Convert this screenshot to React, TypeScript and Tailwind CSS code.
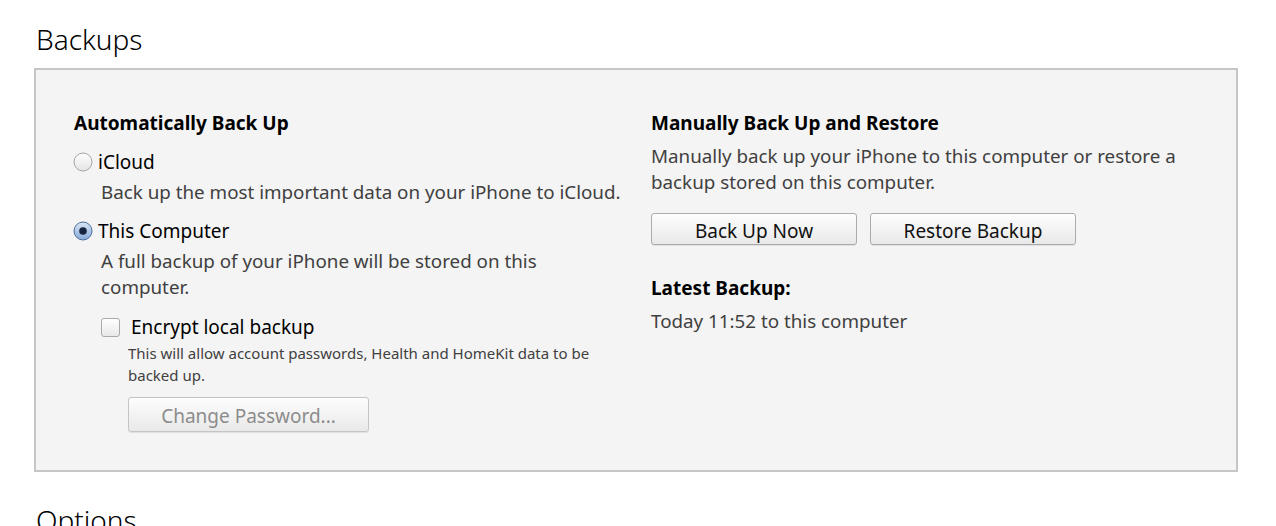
import React from "react";

const font = { fontFamily: '"Noto Sans", "Open Sans", sans-serif' };

function Radio({ checked }: { checked: boolean }) {
  return (
    <svg width="20" height="20" viewBox="0 0 20 20" className="shrink-0">
      <defs>
        <linearGradient id={checked ? "rg1" : "rg0"} x1="0" y1="0" x2="0" y2="1">
          {checked ? (
            <>
              <stop offset="0" stopColor="#dbe7f6" />
              <stop offset="1" stopColor="#86a9d6" />
            </>
          ) : (
            <>
              <stop offset="0" stopColor="#ffffff" />
              <stop offset="1" stopColor="#e4e4e4" />
            </>
          )}
        </linearGradient>
      </defs>
      <circle cx="10" cy="10" r="9" fill={`url(#${checked ? "rg1" : "rg0"})`} stroke={checked ? "#4a6d9c" : "#a5a5a5"} strokeWidth="1" />
      {checked && <circle cx="10" cy="10" r="3.8" fill="#17243b" />}
    </svg>
  );
}

function Btn({ children, w, h, disabled }: { children: React.ReactNode; w: string; h: string; disabled?: boolean }) {
  return (
    <div
      className={`${w} ${h} flex items-center justify-center pt-[3px] rounded-[3px] border bg-gradient-to-b from-[#fdfdfd] to-[#e9e9e9] text-[19px] leading-[26px] shadow-[0_1px_0_rgba(0,0,0,0.08)] ${
        disabled ? "text-[#8c8c8c] border-[#c4c4c4]" : "text-[#111] border-[#ababab]"
      }`}
    >
      {children}
    </div>
  );
}

export default function App() {
  return (
    <div className="w-[1276px] h-[526px] bg-white overflow-hidden" style={font}>
      <div className="pl-[36px] pt-[21px] text-[28px] leading-[36px] text-black font-light">Backups</div>
      <div className="ml-[34px] mt-[11px] w-[1204px] h-[404px] border-2 border-[#c6c6c6] bg-[#f4f4f4] flex pl-[38px] pt-[40px]">
        <div className="w-[577px] flex flex-col">
          <div className="text-[19px] leading-[26px] font-bold text-black">Automatically Back Up</div>
          <div className="flex items-center gap-[5px] mt-[13px] -ml-[1px]">
            <Radio checked={false} />
            <span className="text-[19px] leading-[26px] text-black">iCloud</span>
          </div>
          <div className="pl-[27px] mt-[4px] text-[18.8px] leading-[26px] text-[#404040]">
            Back up the most important data on your iPhone to iCloud.
          </div>
          <div className="flex items-center gap-[5px] mt-[13px] -ml-[1px]">
            <Radio checked={true} />
            <span className="text-[19px] leading-[26px] text-black">This Computer</span>
          </div>
          <div className="pl-[27px] mt-[4px] w-[500px] text-[18.8px] leading-[26px] text-[#404040]">
            A full backup of your iPhone will be stored on this computer.
          </div>
          <div className="pl-[27px] mt-[14px] flex items-center gap-[11px]">
            <div className="w-[19px] h-[19px] rounded-[3px] border border-[#a9a9a9] bg-gradient-to-b from-[#ffffff] to-[#e8e8e8]" />
            <span className="text-[19px] leading-[26px] text-black">Encrypt local backup</span>
          </div>
          <div className="pl-[54px] mt-[2px] w-[540px] text-[15px] leading-[22px] text-[#404040]">
            This will allow account passwords, Health and HomeKit data to be backed up.
          </div>
          <div className="pl-[54px] mt-[11px]">
            <Btn w="w-[241px]" h="h-[35px]" disabled>
              Change Password...
            </Btn>
          </div>
        </div>
        <div className="flex flex-col w-[540px]">
          <div className="text-[19px] leading-[26px] font-bold text-black">Manually Back Up and Restore</div>
          <div className="mt-[7px] text-[18.8px] leading-[26px] text-[#404040]">
            Manually back up your iPhone to this computer or restore a backup stored on this computer.
          </div>
          <div className="mt-[18px] flex gap-[13px]">
            <Btn w="w-[206px]" h="h-[32px]">Back Up Now</Btn>
            <Btn w="w-[206px]" h="h-[32px]">Restore Backup</Btn>
          </div>
          <div className="mt-[30px] text-[19px] leading-[26px] font-bold text-black">Latest Backup:</div>
          <div className="mt-[7px] text-[18.8px] leading-[26px] text-[#404040]">Today 11:52 to this computer</div>
        </div>
      </div>
      <div className="pl-[36px] mt-[30px] text-[28px] leading-[36px] text-black font-light">Options</div>
    </div>
  );
}
